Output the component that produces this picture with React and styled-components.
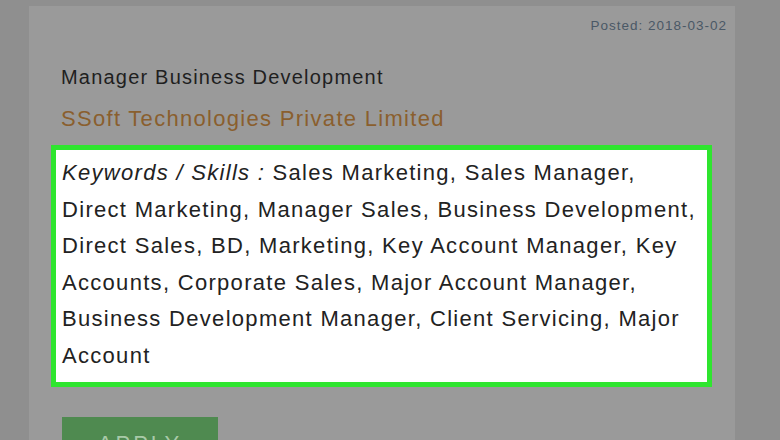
import styled, { createGlobalStyle } from 'styled-components';

const GlobalStyle = createGlobalStyle`
  html, body {
    margin: 0;
    padding: 0;
    background: #8f8f8f;
    font-family: "Liberation Sans", Arial, sans-serif;
    overflow: hidden;
  }
`;

const Page = styled.div`
  width: 780px;
  height: 440px;
  padding: 6px 0 0 29px;
  box-sizing: border-box;
  overflow: hidden;
`;

const Card = styled.div`
  width: 706px;
  height: 480px;
  background: #9a9a9a;
  padding: 12px 8px 0 22px;
  box-sizing: border-box;
`;

const Posted = styled.div`
  text-align: right;
  font-size: 13.5px;
  color: #4a5866;
  letter-spacing: 1px;
`;

const Title = styled.h2`
  margin: 33px 0 0 10px;
  font-size: 20px;
  font-weight: normal;
  color: #1f1f1f;
  letter-spacing: 1.2px;
`;

const Company = styled.div`
  margin: 17px 0 0 10px;
  font-size: 22px;
  color: #8a5f2e;
  letter-spacing: 1.3px;
`;

const Highlight = styled.div`
  margin-top: 13px;
  width: 661px;
  height: 242px;
  box-sizing: border-box;
  border: 5px solid #2fe52f;
  background: #fff;
  padding: 5px 0 0 6px;
  font-size: 22px;
  line-height: 36.5px;
  color: #222;
  letter-spacing: 1.3px;
`;

const Line = styled.div`
  white-space: nowrap;
`;

const Label = styled.em`
  font-style: italic;
`;

const ApplyButton = styled.button`
  margin: 30px 0 0 11px;
  width: 156px;
  height: 44px;
  border: none;
  background: #4f8a50;
  color: #a8c9a8;
  font-family: "Liberation Sans", Arial, sans-serif;
  font-size: 22px;
  letter-spacing: 3px;
  padding: 10px 0 0;
`;

const lines = [
  'Direct Marketing, Manager Sales, Business Development,',
  'Direct Sales, BD, Marketing, Key Account Manager, Key',
  'Accounts, Corporate Sales, Major Account Manager,',
  'Business Development Manager, Client Servicing, Major',
  'Account',
];

export default function App() {
  return (
    <>
      <GlobalStyle />
      <Page>
        <Card>
          <Posted>Posted: 2018-03-02</Posted>
          <Title>Manager Business Development</Title>
          <Company>SSoft Technologies Private Limited</Company>
          <Highlight>
            <Line>
              <Label>Keywords / Skills : </Label>Sales Marketing, Sales Manager,
            </Line>
            {lines.map((l) => (
              <Line key={l}>{l}</Line>
            ))}
          </Highlight>
          <ApplyButton>APPLY</ApplyButton>
        </Card>
      </Page>
    </>
  );
}
